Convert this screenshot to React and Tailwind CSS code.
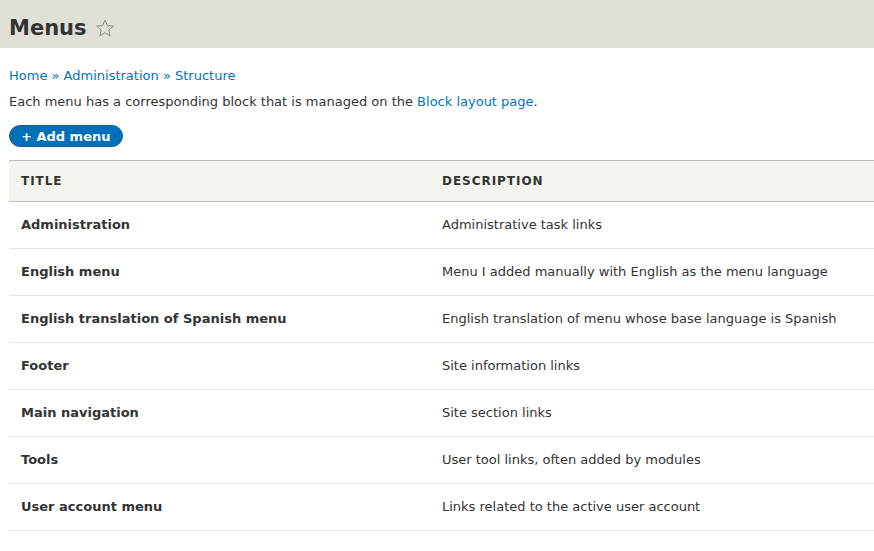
const menus = [
  ["Administration", "Administrative task links"],
  ["English menu", "Menu I added manually with English as the menu language"],
  ["English translation of Spanish menu", "English translation of menu whose base language is Spanish"],
  ["Footer", "Site information links"],
  ["Main navigation", "Site section links"],
  ["Tools", "User tool links, often added by modules"],
  ["User account menu", "Links related to the active user account"],
];

export default function App() {
  return (
    <div className="min-h-[551px] bg-white text-[13px] text-[#333] font-['DejaVu_Sans',sans-serif]">
      {/* Page header */}
      <div className="h-12 bg-[#e0e0d8] pl-[9px] pt-[17px] flex items-start">
        <h1 className="text-[21px] font-bold text-[#333] leading-[22px]">Menus</h1>
        <svg className="ml-[8px] mt-[1px]" width="20" height="20" viewBox="0 0 24 24" fill="none" stroke="#8a8a80" strokeWidth="1.2" strokeLinejoin="miter">
          <path d="M12 2.5l2.9 6.6 7.1.6-5.4 4.7 1.6 7-6.2-3.7-6.2 3.7 1.6-7L2 9.7l7.1-.6z" />
        </svg>
      </div>

      <div className="pl-[9px]">
        {/* Breadcrumb */}
        <div className="pt-[19px] text-[#0074bd] leading-[18px]">
          <a>Home</a> » <a>Administration</a> » <a>Structure</a>
        </div>
        <p className="mt-[8px] leading-[18px]">
          Each menu has a corresponding block that is managed on the{" "}
          <a className="text-[#0074bd]">Block layout page</a>.
        </p>

        <button className="mt-[14px] h-[22px] px-[11px] rounded-full bg-[#0071b8] border border-[#1e5c90] text-white font-bold text-[13px] leading-none">
          + Add menu
        </button>

        {/* Table */}
        <table className="mt-[13px] w-full border-collapse text-left">
          <thead>
            <tr className="bg-[#f3f4ee] border-t border-b border-[#bfbfba]">
              <th className="h-[41px] pl-[12px] w-[421px] text-[12px] font-bold uppercase tracking-[0.08em]">Title</th>
              <th className="pl-[12px] text-[12px] font-bold uppercase tracking-[0.08em]">Description</th>
            </tr>
          </thead>
          <tbody>
            {menus.map(([title, desc]) => (
              <tr key={title} className="border-b border-[#e6e4df]">
                <td className="h-[47px] pl-[12px] font-bold">{title}</td>
                <td className="pl-[12px]">{desc}</td>
              </tr>
            ))}
          </tbody>
        </table>
      </div>
    </div>
  );
}
